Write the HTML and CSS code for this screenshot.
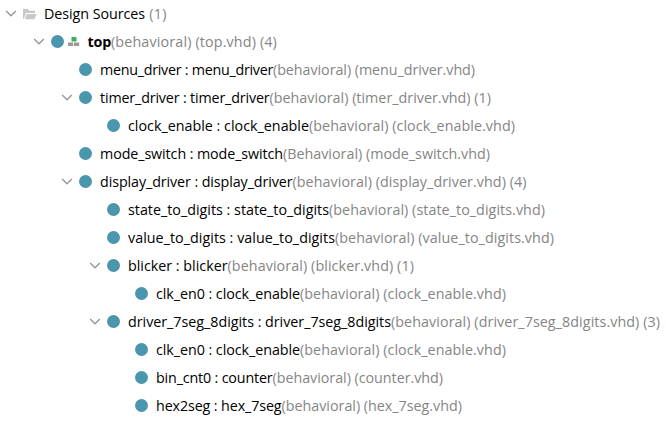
FILE: index.html
```html
<!DOCTYPE html>
<html lang="en"><head><meta charset="utf-8"><title>Design Sources</title><link rel="stylesheet" href="styles.css"></head>
<body><ul class="tree" id="tree"></ul><script src="tree.js"></script></body></html>
```
FILE: styles.css
```css
body { margin: 0; background: #fff; }
.tree { margin: 0; padding: 0; list-style: none; font: 14.3px/28px "Open Sans", sans-serif; color: #000; }
.row { display: flex; align-items: center; height: 28px; white-space: pre; }
.chevron { width: 12px; height: 12px; margin-right: 6px; flex: none; }
.dot { width: 13px; height: 13px; border-radius: 50%; background: #4a96ad; flex: none; margin: 0 8px 1px 0; }
.folder { width: 14px; height: 12px; margin: 0 7px 1px 0; flex: none; }
.hierarchy { width: 12px; height: 10px; margin: 0 7.5px 0 -4px; flex: none; }
.muted { color: #858585; }
.bold { font-weight: 700; }
.part { display: block; flex: none; }
.level-0 { padding-left: 5px; }
.level-1 { padding-left: 33px; }
.level-2 { padding-left: 61px; }
.level-3 { padding-left: 89px; }
.level-4 { padding-left: 117px; }
```
FILE: tree.js
```js
const chevron = '<svg class="chevron" viewBox="0 0 12 12"><path d="M1.2 3 6 7.8 10.8 3" fill="none" stroke="#999" stroke-width="1.5"/></svg>';
const icons = {
  folder: '<svg class="folder" viewBox="0 0 14 12"><path d="M0 1h5l1.2 1.8H12V5H3L.8 11H0zM3.7 6H13.5l-1.9 5.2H1.8z" fill="#c8c8c8"/></svg>',
  hierarchy: '<svg class="hierarchy" viewBox="0 0 12 10"><path d="M3.5 0h5v4.5h-5z" fill="#3fae5a"/><path d="M0 5.5h5.2V9H0zM6 5.5h5.2V9H6z" fill="#999"/></svg>'
};
// level, expandable, name, detail, name width, detail width
const rows = [
  [0, 1, "Design Sources", " (1)", 101, 22],
  [1, 1, "top", "(behavioral) (top.vhd) (4)", 23.5, 166],
  [2, 0, "menu_driver : menu_driver", "(behavioral) (menu_driver.vhd)", 173, 202],
  [2, 1, "timer_driver : timer_driver", "(behavioral) (timer_driver.vhd) (1)", 169.5, 221.5],
  [3, 0, "clock_enable : clock_enable", "(behavioral) (clock_enable.vhd)", 181, 206],
  [2, 0, "mode_switch : mode_switch", "(Behavioral) (mode_switch.vhd)", 183, 207],
  [2, 1, "display_driver : display_driver", "(behavioral) (display_driver.vhd) (4)", 192.5, 234],
  [3, 0, "state_to_digits : state_to_digits", "(behavioral) (state_to_digits.vhd)", 201, 216],
  [3, 0, "value_to_digits : value_to_digits", "(behavioral) (value_to_digits.vhd)", 207, 219],
  [3, 1, "blicker : blicker", "(behavioral) (blicker.vhd) (1)", 99.5, 186.5],
  [4, 0, "clk_en0 : clock_enable", "(behavioral) (clock_enable.vhd)", 144, 206],
  [3, 1, "driver_7seg_8digits : driver_7seg_8digits", "(behavioral) (driver_7seg_8digits.vhd) (3)", 263, 269],
  [4, 0, "clk_en0 : clock_enable", "(behavioral) (clock_enable.vhd)", 144, 206],
  [4, 0, "bin_cnt0 : counter", "(behavioral) (counter.vhd)", 116.5, 170.5],
  [4, 0, "hex2seg : hex_7seg", "(behavioral) (hex_7seg.vhd)", 125.5, 180.5]
];
const part = (text, width, cls) => `<span class="part ${cls}" data-width="${width}">${text}</span>`;
document.getElementById("tree").innerHTML = rows.map(([level, open, name, detail, nameWidth, detailWidth]) =>
  `<li class="row level-${level}">${open ? chevron : '<span class="chevron"></span>'}${level ? '<span class="dot"></span>' : icons.folder}${level === 1 ? icons.hierarchy : ''}${part(name, nameWidth, level === 1 ? 'bold' : '')}${part(detail, detailWidth, 'muted')}</li>`).join("");
document.querySelectorAll(".part").forEach(el => {
  const gap = el.dataset.width - el.getBoundingClientRect().width;
  el.style.letterSpacing = gap / el.textContent.length + "px";
});
```
